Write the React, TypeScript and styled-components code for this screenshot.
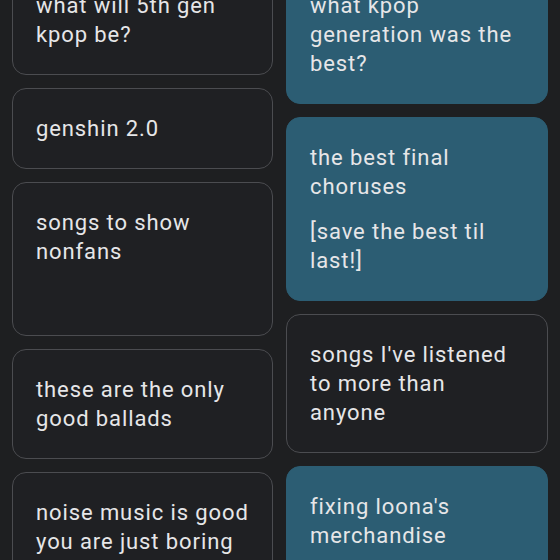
import React from "react";
import styled, { createGlobalStyle } from "styled-components";

type Note = {
  paragraphs: string[];
  colored?: boolean;
  minHeight?: number;
};

// Two columns of notes, the way the masonry grid lays them out
const leftNotes: Note[] = [
  { paragraphs: ["what will 5th gen kpop be?"] },
  { paragraphs: ["genshin 2.0"] },
  { paragraphs: ["songs to show nonfans"], minHeight: 154 },
  { paragraphs: ["these are the only good ballads"] },
  { paragraphs: ["noise music is good you are just boring"] },
];

const rightNotes: Note[] = [
  { paragraphs: ["what kpop generation was the best?"], colored: true },
  {
    paragraphs: ["the best final choruses", "[save the best til last!]"],
    colored: true,
  },
  { paragraphs: ["songs I've listened to more than anyone"] },
  { paragraphs: ["fixing loona's merchandise"], colored: true },
];

const GlobalStyle = createGlobalStyle`
  html, body {
    margin: 0;
    padding: 0;
    background: #1e1f21;
    overflow: hidden;
  }
  body {
    font-family: Roboto, "Noto Sans", sans-serif;
  }
`;

const Board = styled.div`
  display: grid;
  grid-template-columns: 261px 262px;
  column-gap: 13px;
  padding: 0 12px;
  margin-top: -35px;
  height: 595px;
  overflow: hidden;
`;

const Column = styled.div`
  display: flex;
  flex-direction: column;
  gap: 13px;
`;

const Card = styled.div<{ $colored?: boolean; $minHeight?: number }>`
  box-sizing: border-box;
  border-radius: 14px;
  padding: 25px 22px 25px 23px;
  background: ${(p) => (p.$colored ? "#2c5d73" : "#1f2023")};
  border: 1px solid ${(p) => (p.$colored ? "#2c5d73" : "#4b4c50")};
  min-height: ${(p) => (p.$minHeight ? `${p.$minHeight}px` : "0")};
  display: flex;
  flex-direction: column;
  gap: 16px;
`;

const Text = styled.p`
  margin: 0;
  color: #e6e6e8;
  font-size: 22px;
  line-height: 29px;
  letter-spacing: 0.9px;
`;

const NoteCard = ({ note }: { note: Note }) => (
  <Card $colored={note.colored} $minHeight={note.minHeight}>
    {note.paragraphs.map((p, i) => (
      <Text key={i}>{p}</Text>
    ))}
  </Card>
);

const App = () => {
  return (
    <>
      <GlobalStyle />
      <Board>
        <Column>
          {leftNotes.map((n, i) => (
            <NoteCard key={i} note={n} />
          ))}
        </Column>
        <Column>
          {rightNotes.map((n, i) => (
            <NoteCard key={i} note={n} />
          ))}
        </Column>
      </Board>
    </>
  );
};

export default App;
